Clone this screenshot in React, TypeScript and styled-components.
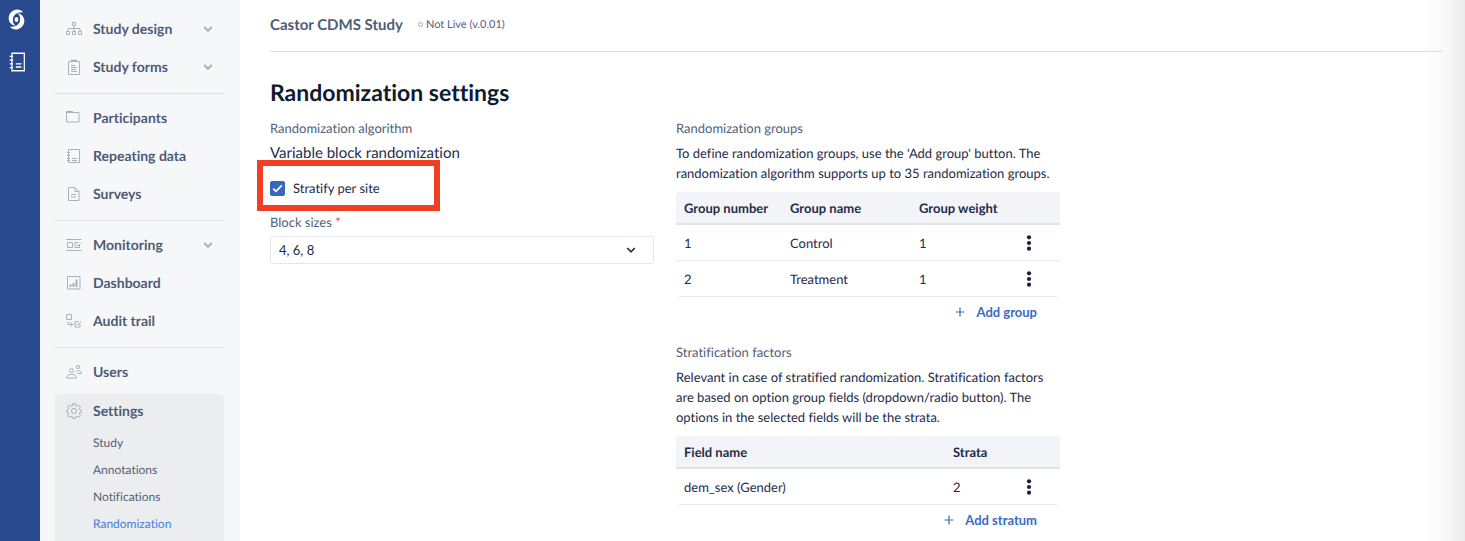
import React from "react";
import styled, { createGlobalStyle } from "styled-components";

const GlobalStyle = createGlobalStyle`
  *, *::before, *::after { box-sizing: border-box; }
  body {
    margin: 0;
    background: #ffffff;
    color: #1f2c48;
    font-family: Lato, "Liberation Sans", sans-serif;
    font-size: 13px;
    font-variant-ligatures: none;
    line-height: 20px;
    text-rendering: geometricPrecision;
  }
`;

const Page = styled.div`
  display: flex;
  height: 100vh;
  overflow: hidden;

  &::after {
    content: "";
    position: fixed;
    top: 0;
    right: 0;
    bottom: 0;
    width: 44px;
    background: linear-gradient(to right, rgba(0, 0, 0, 0), rgba(0, 0, 0, 0.02) 50%, rgba(0, 0, 0, 0.08));
    pointer-events: none;
  }
`;

const Rail = styled.nav`
  flex: none;
  display: flex;
  flex-direction: column;
  align-items: center;
  gap: 20px;
  width: 40px;
  padding: 8px 7px 0 0;
  background: #28498e;
`;

const RailLink = styled.a`
  display: flex;
  color: #ffffff;
`;

const Sidebar = styled.nav`
  flex: none;
  display: flex;
  flex-direction: column;
  width: 200px;
  padding: 10px 16px 0 15px;
  background: #f6f7f9;
`;

const NavLink = styled.a<{ $height?: number }>`
  flex: none;
  display: grid;
  grid-template-columns: 16px 1fr 10px;
  column-gap: 11px;
  align-items: center;
  height: ${(p) => p.$height ?? 38}px;
  padding: 0 11px;
  color: #4f5b76;
  font-size: 14px;
  font-weight: 700;
  text-decoration: none;

  svg {
    color: #a9b0be;
  }
`;

const Separator = styled.hr`
  flex: none;
  width: 100%;
  height: 1px;
  margin: 7px 0 5px;
  border: 0;
  background: #dcdfe4;
`;

const SettingsPanel = styled.div`
  flex: 1 0 auto;
  margin-top: 3px;
  border-radius: 4px 4px 0 0;
  background: #ebedee;
`;

const SubList = styled.ul`
  margin: 1px 0 0;
  padding: 0 0 0 38px;
  list-style: none;
`;

const SubLink = styled.a<{ $active?: boolean }>`
  display: block;
  color: ${(p) => (p.$active ? "#4580dc" : "#56617a")};
  font-size: 12px;
  line-height: 27px;
  text-decoration: none;
`;

const Main = styled.main`
  flex: 1;
  min-width: 0;
  padding: 0 22px 0 30px;
`;

const Header = styled.header`
  display: flex;
  align-items: center;
  gap: 15px;
  height: 52px;
  padding-bottom: 2px;
  border-bottom: 1px solid #dfe0e3;
`;

const StudyName = styled.span`
  color: #4f5b76;
  font-size: 15px;
  font-weight: 700;
`;

const Status = styled.span`
  display: flex;
  align-items: center;
  gap: 3px;
  color: #56617a;
  font-size: 11px;

  &::before {
    content: "";
    width: 5px;
    height: 5px;
    border: 1px solid #a4abba;
    border-radius: 50%;
  }
`;

const Title = styled.h1`
  margin: 26px 0 12px;
  color: #101a30;
  font-size: 23px;
  font-weight: 700;
  line-height: 28px;
`;

const Columns = styled.div`
  display: grid;
  grid-template-columns: repeat(2, minmax(0, 384px));
  column-gap: 22px;
  align-items: start;
`;

const Label = styled.div`
  margin-bottom: 5px;
  color: #515f7d;
  line-height: 20px;
`;

const FieldLabel = styled.label`
  display: block;
  margin-bottom: 4px;
  color: #515f7d;
`;

const Required = styled.span`
  color: #d64550;
`;

const Value = styled.div`
  font-size: 15px;
`;

const CheckRow = styled.div`
  position: relative;
  margin: 15px 0 14px;

  &::after {
    content: "";
    position: absolute;
    top: -18px;
    left: -13px;
    width: 183px;
    height: 51px;
    border: 6px solid #ee3f24;
    pointer-events: none;
  }
`;

const CheckLabel = styled.label`
  display: flex;
  align-items: center;
  gap: 8px;
`;

const CheckBox = styled.span`
  display: grid;
  place-items: center;

  > * {
    grid-area: 1 / 1;
  }

  input {
    appearance: none;
    width: 15px;
    height: 15px;
    margin: 0;
    border: 1px solid #3567bd;
    border-radius: 2px;
    background: #ffffff;
  }

  input:checked {
    background: #3567bd;
  }

  svg {
    visibility: hidden;
    color: #ffffff;
    pointer-events: none;
  }

  input:checked + svg {
    visibility: visible;
  }
`;

const SelectBox = styled.div`
  display: grid;
  align-items: center;

  > * {
    grid-area: 1 / 1;
  }

  select {
    appearance: none;
    width: 100%;
    height: 28px;
    padding: 0 8px;
    border: 1px solid #e3e6ee;
    border-radius: 3px;
    background: #ffffff;
    color: #1f2c48;
    font: inherit;
  }

  svg {
    justify-self: end;
    margin-right: 18px;
    color: #1f2c48;
    pointer-events: none;
  }
`;

const Description = styled.p`
  margin: 0 0 9px;
`;

const Section = styled.section`
  & + & {
    margin-top: 20px;
  }
`;

const Table = styled.table`
  width: 100%;
  table-layout: fixed;
  border-collapse: separate;
  border-spacing: 0;

  th,
  td {
    padding: 0 0 0 8px;
    text-align: left;
  }

  th {
    height: 33px;
    border-bottom: 2px solid #dfe3ea;
    background: #f3f4f8;
    font-weight: 700;
  }

  th:first-child {
    border-top-left-radius: 4px;
  }

  th:last-child {
    border-top-right-radius: 4px;
  }

  td {
    height: 36px;
    border-bottom: 1px solid #e6e8ee;
  }

  tr:last-child td {
    height: 35px;
    border-bottom: 0;
  }
`;

const Col = styled.col<{ $width?: number }>`
  width: ${(p) => (p.$width ? `${p.$width}px` : "auto")};
`;

const MenuButton = styled.button`
  display: block;
  padding: 0 4px;
  border: 0;
  background: none;
  color: #16213c;

  svg {
    display: block;
  }
`;

const TableFooter = styled.div`
  display: flex;
  justify-content: flex-end;
  margin: 0 3px;
  padding: 5px 20px 0 0;
  border-top: 1px solid #e6e8ee;
`;

const AddButton = styled.button`
  display: flex;
  align-items: center;
  gap: 11px;
  padding: 0;
  border: 0;
  background: none;
  color: #3b6bc0;
  font: inherit;
  font-weight: 700;
`;

const Icon = ({ children, size = 16 }: { children: React.ReactNode; size?: number }) => (
  <svg width={size} height={size} viewBox={`0 0 ${size} ${size}`} fill="none" stroke="currentColor" aria-hidden="true">
    {children}
  </svg>
);

const Chevron = ({ width = 2 }: { width?: number }) => (
  <svg width="10" height="8" viewBox="0 0 10 8" fill="none" stroke="currentColor" strokeWidth={width} aria-hidden="true">
    <path d="M1.2 2 5 5.8 8.8 2" />
  </svg>
);

const Dots = () => (
  <svg width="6" height="16" viewBox="0 0 6 16" fill="currentColor" aria-hidden="true">
    <circle cx="3" cy="2.3" r="2.1" />
    <circle cx="3" cy="8" r="2.1" />
    <circle cx="3" cy="13.7" r="2.1" />
  </svg>
);

const Plus = () => (
  <Icon size={10}>
    <path d="M5 .5v9M.5 5h9" strokeWidth="1.2" />
  </Icon>
);

const Logo = () => (
  <svg width="17" height="24" viewBox="0 0 17 24" fill="currentColor" aria-hidden="true">
    <path d="M15.200 4.200C13 1.500 9.500.8 6.500 2 2.500 3.500.5 7 .7 10.500c.2 4 2.800 6.700 7 7.300C5.500 16.300 4.600 14 4.900 11 5.300 6.900 9 3.600 15.200 4.200z" />
    <path d="M1.800 18.800c2.200 2.700 5.700 3.400 8.700 2.200 4-1.500 6-5 5.800-8.500-.2-4-2.800-6.700-7-7.300 2.200 1.500 3.100 3.800 2.800 6.800-.4 4.100-4.100 7.400-10.300 6.800z" />
    <ellipse cx="8.500" cy="11.500" rx="1.900" ry="2.600" />
  </svg>
);

const NotebookPaths = () => (
  <>
    <path d="M3.500 1h11v14h-11z" />
    <path d="M1.500 3.500h3M1.500 6.500h3M1.500 9.500h3M1.500 12.500h3M7 9.500h5M7 12h5" />
  </>
);

const icons = {
  design: (
    <Icon>
      <path d="M6.500 1.500h3v3h-3zM.5 10.500h3v3h-3zM6.500 10.500h3v3h-3zM12.500 10.500h3v3h-3zM8 4.500v6M2 10.500v-3h12v3" />
    </Icon>
  ),
  forms: (
    <Icon>
      <path d="M2.500 2.500h11v13h-11z" />
      <path d="M5 1.700h6" strokeWidth="2" />
      <path d="M5 6.500h4M5 8.500h6M5 10.500h5M5 12.500h6" />
    </Icon>
  ),
  folder: (
    <Icon>
      <path d="M.5 2.500h12.500v9.500H.5z" />
      <path d="M0 2h7" strokeWidth="2" />
    </Icon>
  ),
  notebook: (
    <Icon>
      <path d="M2.500 1.500h11v13h-11z" />
      <path d="M1 4.500h3M1 7.500h3M1 10.500h3M1 12.500h3M6 10.500h5M6 12.500h5" />
    </Icon>
  ),
  survey: (
    <Icon>
      <path d="M2.500 1.500h6.500l4 4v9h-10.500zM9 1.500v4h4M5 8.500h5M5 11h5" />
    </Icon>
  ),
  monitoring: (
    <Icon>
      <path d="M0 2.500h15.500M0 13.500h15.500M1.500 5.500h5v5h-5zM13.500 8v2.500H9v-5h3.500M10.500 7.500l1.500 1.500 3-3.500" />
    </Icon>
  ),
  dashboard: (
    <Icon>
      <path d="M1.500 1.500h12.500v12.500h-12.500z" />
      <path d="M4.500 9.500v2.500M7.500 8v4M10.500 4.500v7.500" strokeWidth="2" />
    </Icon>
  ),
  audit: (
    <Icon>
      <path d="M.5 1.500h5v5h-5zM2 8.500v3h4.500M4.500 9.200l2.300 2.300-2.300 2.300M14 11v3H9V8.500h3.500M10.500 10.500 12 12l3-3.500" />
    </Icon>
  ),
  users: (
    <Icon>
      <circle cx="5.500" cy="6.500" r="2" />
      <path d="M.5 14c0-2.500 2-3.500 5-3.500s5 1 5 3.500z" />
      <circle cx="12" cy="3" r="1.600" />
      <path d="M10 8.500c.5-1.500 1.300-1.700 2.500-1.700 1.800 0 3 .7 3 2.700h-4" />
    </Icon>
  ),
  settings: (
    <Icon>
      <path d="M6.700.7h2.600l.3 2 1.400.6 1.700-1.200 1.800 1.800-1.200 1.700.6 1.400 2 .3v1.900l-2 .3-.6 1.500 1.200 1.600-1.800 1.900L11 13.200l-1.400.6-.3 1.600H6.700l-.3-1.600-1.400-.6-1.700 1.300-1.800-1.900 1.200-1.600-.6-1.500-1.500-.3V7.300l1.500-.3.6-1.400-1.200-1.700 1.800-1.800L5 3.300l1.400-.6z" />
      <circle cx="8" cy="8" r="2.500" />
    </Icon>
  ),
};

type IconName = keyof typeof icons;

const NavItem = ({ icon, label, expandable, height }: { icon: IconName; label: string; expandable?: boolean; height?: number }) => (
  <NavLink href="#" $height={height}>
    {icons[icon]}
    {label}
    {expandable && <Chevron />}
  </NavLink>
);

const RowMenu = ({ label }: { label: string }) => (
  <MenuButton type="button" aria-label={label}>
    <Dots />
  </MenuButton>
);

const groups = [
  { number: 1, name: "Control", weight: 1 },
  { number: 2, name: "Treatment", weight: 1 },
];

export default function App() {
  return (
    <>
      <GlobalStyle />
      <Page>
        <Rail aria-label="Applications">
          <RailLink href="#" aria-label="Home">
            <Logo />
          </RailLink>
          <RailLink href="#" aria-label="Studies">
            <svg width="18" height="20" viewBox="0 0 16 16" preserveAspectRatio="none" fill="none" stroke="currentColor" strokeWidth="1.100" aria-hidden="true">
              <NotebookPaths />
            </svg>
          </RailLink>
        </Rail>
        <Sidebar aria-label="Study">
          <NavItem icon="design" label="Study design" expandable />
          <NavItem icon="forms" label="Study forms" expandable />
          <Separator />
          <NavItem icon="folder" label="Participants" />
          <NavItem icon="notebook" label="Repeating data" />
          <NavItem icon="survey" label="Surveys" />
          <Separator />
          <NavItem icon="monitoring" label="Monitoring" expandable />
          <NavItem icon="dashboard" label="Dashboard" />
          <NavItem icon="audit" label="Audit trail" />
          <Separator />
          <NavItem icon="users" label="Users" />
          <SettingsPanel>
            <NavItem icon="settings" label="Settings" height={34} />
            <SubList>
              {["Study", "Annotations", "Notifications", "Randomization"].map((item) => (
                <li key={item}>
                  <SubLink href="#" $active={item === "Randomization"}>
                    {item}
                  </SubLink>
                </li>
              ))}
            </SubList>
          </SettingsPanel>
        </Sidebar>
        <Main>
          <Header>
            <StudyName>Castor CDMS Study</StudyName>
            <Status>Not Live (v.0.01)</Status>
          </Header>
          <Title>Randomization settings</Title>
          <Columns>
            <section>
              <Label>Randomization algorithm</Label>
              <Value>Variable block randomization</Value>
              <CheckRow>
                <CheckLabel>
                  <CheckBox>
                    <input type="checkbox" defaultChecked />
                    <svg width="11" height="9" viewBox="0 0 11 9" fill="none" stroke="currentColor" strokeWidth="1.800" aria-hidden="true">
                      <path d="M1.200 4.700 4 7.300 9.800 1.300" />
                    </svg>
                  </CheckBox>
                  Stratify per site
                </CheckLabel>
              </CheckRow>
              <FieldLabel htmlFor="block-sizes">
                Block sizes <Required>*</Required>
              </FieldLabel>
              <SelectBox>
                <select id="block-sizes" required>
                  <option>4, 6, 8</option>
                </select>
                <Chevron width={1.6} />
              </SelectBox>
            </section>
            <div>
              <Section>
                <Label>Randomization groups</Label>
                <Description>
                  To define randomization groups, use the 'Add group' button. The randomization algorithm supports up to 35
                  randomization groups.
                </Description>
                <Table>
                  <colgroup>
                    <Col $width={106} />
                    <Col $width={129} />
                    <Col />
                    <Col $width={46} />
                  </colgroup>
                  <thead>
                    <tr>
                      <th>Group number</th>
                      <th>Group name</th>
                      <th>Group weight</th>
                      <th />
                    </tr>
                  </thead>
                  <tbody>
                    {groups.map((group) => (
                      <tr key={group.number}>
                        <td>{group.number}</td>
                        <td>{group.name}</td>
                        <td>{group.weight}</td>
                        <td>
                          <RowMenu label={`Actions for ${group.name}`} />
                        </td>
                      </tr>
                    ))}
                  </tbody>
                </Table>
                <TableFooter>
                  <AddButton type="button">
                    <Plus />
                    Add group
                  </AddButton>
                </TableFooter>
              </Section>
              <Section>
                <Label>Stratification factors</Label>
                <Description>
                  Relevant in case of stratified randomization. Stratification factors are based on option group fields
                  (dropdown/radio button). The options in the selected fields will be the strata.
                </Description>
                <Table>
                  <colgroup>
                    <Col />
                    <Col $width={69} />
                    <Col $width={46} />
                  </colgroup>
                  <thead>
                    <tr>
                      <th>Field name</th>
                      <th>Strata</th>
                      <th />
                    </tr>
                  </thead>
                  <tbody>
                    <tr>
                      <td>dem_sex (Gender)</td>
                      <td>2</td>
                      <td>
                        <RowMenu label="Actions for dem_sex" />
                      </td>
                    </tr>
                  </tbody>
                </Table>
                <TableFooter>
                  <AddButton type="button">
                    <Plus />
                    Add stratum
                  </AddButton>
                </TableFooter>
              </Section>
            </div>
          </Columns>
        </Main>
      </Page>
    </>
  );
}
